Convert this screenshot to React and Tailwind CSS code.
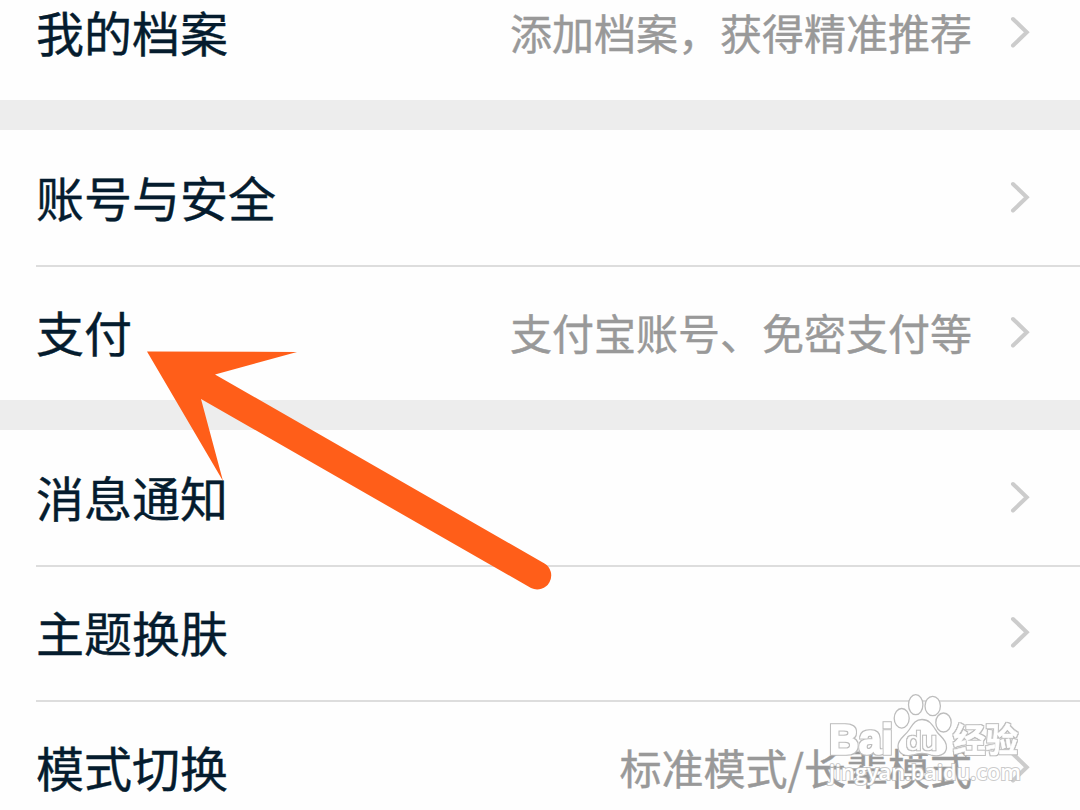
import React from "react";

const groups = [
    [{ title: "我的档案", value: "添加档案，获得精准推荐" }],
    [{ title: "账号与安全" }, { title: "支付", value: "支付宝账号、免密支付等" }],
    [{ title: "消息通知" }, { title: "主题换肤" }, { title: "模式切换", value: "标准模式/长辈模式" }],
];

function Chevron() {
    return (
        <svg className="w-[22px] h-[34px] shrink-0" viewBox="0 0 22 34" fill="none" stroke="#cccccc" strokeWidth="4" strokeLinecap="round" strokeLinejoin="miter">
            <path d="M4 3 L17.8 16.2 L4 29.5" />
        </svg>
    );
}

function Row({ title, value, first }) {
    return (
        <div className={`ml-9 h-[135px] flex items-center justify-between pr-[49px] ${first ? "" : "border-t-2 border-[#dddddd] pb-[2px]"}`}>
            <span className="text-[48px] leading-[66px] pb-[3px] text-[#051c2e] [-webkit-text-stroke:0.4px]">{title}</span>
            <div className="flex items-center">
                {value && <span className="text-[42px] leading-[62px] text-[#999999] mr-[37px] pb-[2px] [-webkit-text-stroke:0.4px]">{value}</span>}
                <Chevron />
            </div>
        </div>
    );
}

function Arrow() {
    return (
        <svg className="absolute left-0 top-0 w-[1080px] h-[810px] pointer-events-none" viewBox="0 0 1080 810" fill="#ff5e19">
            <path d="M147 351.5 L297 352 L215 374.5 L544.5 563.5 A14 14 0 0 1 531 588 L201 399 L223 481 Z" />
        </svg>
    );
}

function Watermark() {
    return (
        <svg className="absolute left-[810px] top-[680px] w-[230px] h-[120px] pointer-events-none" viewBox="810 680 230 120" fill="#ffffff" stroke="#bdbdbd" strokeWidth="1.3">
            {/* Grey rim, one pixel wide, behind the letters */}
            <filter id="rim" filterUnits="userSpaceOnUse" x="810" y="680" width="230" height="120" colorInterpolationFilters="sRGB">
                <feMorphology in="SourceAlpha" operator="dilate" radius="1" result="grown" />
                <feFlood floodColor="#bcbcbc" />
                <feComposite in2="grown" operator="in" result="edge" />
                <feMerge>
                    <feMergeNode in="edge" />
                    <feMergeNode in="SourceGraphic" />
                </feMerge>
            </filter>
            <ellipse cx="901.7" cy="718.3" rx="7.5" ry="9.8" />
            <ellipse cx="915.7" cy="704.7" rx="7.2" ry="10" />
            <ellipse cx="932.7" cy="706" rx="7.7" ry="9.7" />
            <ellipse cx="943.5" cy="722.5" rx="7.7" ry="9.5" />
            <path d="M922 719.5 C930 719.5 933 726 937 732 C942 738 947 741 946.5 748 C946 755 938 757 931 755 C925 753 919 753 913 755 C905 757 898 754 898 746 C898 739 905 736 909 730 C913 724 915 719.5 922 719.5 Z" />
            <g stroke="#ffffff" filter="url(#rim)">
                <text x="829" y="753.5" fontSize="42" fontWeight="700" textLength="64" lengthAdjust="spacingAndGlyphs" strokeWidth="1.6" className="font-['Liberation_Sans',sans-serif]">Bai</text>
                <text x="953" y="752" fontSize="33" fontWeight="700" textLength="65" lengthAdjust="spacingAndGlyphs" strokeWidth="0.6" className="font-['Noto_Sans_CJK_SC',sans-serif]">经验</text>
                <text x="906" y="749.5" fontSize="26" textLength="31" lengthAdjust="spacingAndGlyphs" strokeWidth="0.4" className="font-['Liberation_Sans',sans-serif]">du</text>
            </g>
            <text x="829" y="780" fontSize="22" fontWeight="600" textLength="192" lengthAdjust="spacingAndGlyphs" strokeWidth="2" strokeOpacity="0.8" paintOrder="stroke" className="font-['Open_Sans',sans-serif]">jingyan.baidu.com</text>
        </svg>
    );
}

export default function App() {
    return (
        <div className="relative w-[1080px] h-[810px] overflow-hidden bg-[#fefefe] font-['Noto_Sans_CJK_SC',sans-serif]">
            {/* The list is scrolled, so the first row is cut off at the top */}
            <div className="-mt-[35px] flex flex-col gap-[30px] bg-[#ededed]">
                {groups.map((rows, i) => (
                    <section key={i} className="bg-[#fefefe]">
                        {rows.map((row, j) => (
                            <Row key={row.title} {...row} first={j === 0} />
                        ))}
                    </section>
                ))}
            </div>
            <Arrow />
            <Watermark />
        </div>
    );
}
